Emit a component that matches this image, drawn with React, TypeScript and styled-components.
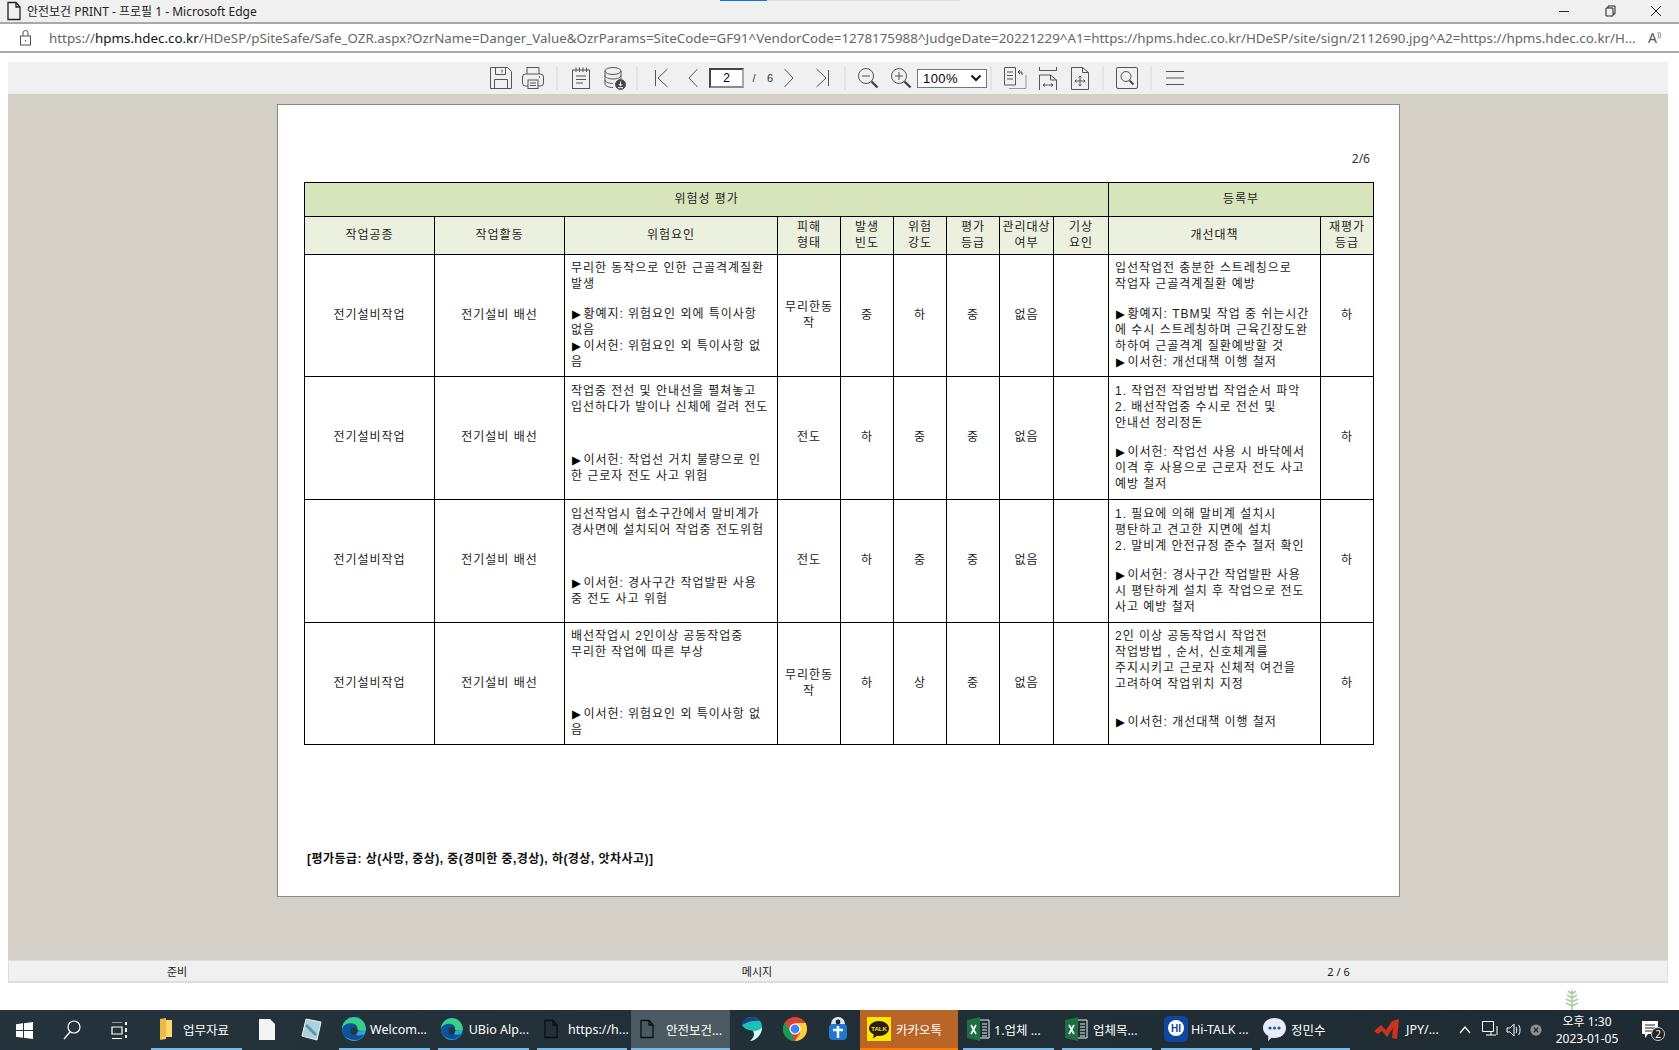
import React from "react";
import styled, { createGlobalStyle } from "styled-components";

const UI = `"Noto Sans", "Noto Sans CJK KR", sans-serif`;
const DOC = `"Liberation Sans", "Noto Sans CJK KR", sans-serif`;

const Global = createGlobalStyle`
  html, body { margin: 0; padding: 0; background: #fff; overflow: hidden; }
  * { box-sizing: border-box; }
`;

const Shell = styled.div`
  width: 1679px; height: 1050px; display: flex; flex-direction: column;
  position: relative; overflow: hidden; background: #fff; font-family: ${UI};
`;
const LoadBar = styled.div`position: absolute; left: 720px; top: 0; width: 47px; height: 1px; background: #0a78d4;`;
const LoadTrack = styled.div`position: absolute; left: 767px; top: 0; width: 193px; height: 1px; background: #e0e0e0;`;

const TitleBar = styled.div`
  height: 24px; flex: none; background: #f0f0f0; border-bottom: 2px solid #a8a8a8;
  display: flex; align-items: center; padding-left: 6px; color: #222; font-size: 12px; gap: 5px;
`;
const TitleText = styled.span`flex: 1; white-space: nowrap;`;
const WinControls = styled.div`display: flex; align-items: center; gap: 0;`;
const WinBtn = styled.svg`width: 46px; height: 12px; fill: none; stroke: #222; stroke-width: 1;`;

const UrlBar = styled.div`
  height: 29px; flex: none; background: #fff; border-bottom: 2px solid #a8a8a8;
  display: flex; align-items: center; padding-left: 20px;
`;
const UrlText = styled.div`
  margin-left: 18px; width: 1590px; white-space: nowrap;
  font-size: 13.36px; color: #666;
  b { font-weight: 400; color: #111; }
`;
const ReadAloud = styled.span`margin-left: 9px; font-size: 14px; color: #555; position: relative;`;

const Body = styled.div`
  flex: 1; display: flex; flex-direction: column; padding: 9px 11px 27px 8px; min-height: 0;
`;
const Toolbar = styled.div`
  height: 32px; flex: none; background: #f0f0f0; display: flex; align-items: center; padding-left: 477px;
`;
const Tool = styled.div<{ $w: number }>`
  width: ${p => p.$w}px; height: 32px; flex: none; display: flex; align-items: center; justify-content: center;
`;
const ToolIcon = styled.svg`fill: none; stroke: #555; stroke-width: 1; display: block;`;
const Sep = styled.div<{ $w: number }>`
  width: ${p => p.$w}px; height: 24px; flex: none; display: flex; justify-content: center;
  &::after { content: ""; width: 2px; height: 100%; background: #e4e4e4; }
`;
const PageInput = styled.div`
  width: 35px; height: 20px; margin-left: 5px; flex: none; background: #fff; border: 2px solid #444; border-right-color: #aaa; border-bottom-color: #888;
  font: 12px ${DOC}; color: #000; display: flex; align-items: center; justify-content: center;
`;
const PageLabel = styled.div<{ $w: number }>`
  width: ${p => p.$w}px; flex: none; text-align: center; font: 11px ${DOC}; color: #333;
`;
const ZoomSelect = styled.div`
  width: 70px; height: 19px; margin-left: 4px; flex: none; background: #fff; border: 1px solid #767676;
  display: flex; align-items: center; justify-content: space-between; padding: 0 4px 0 5px;
  font: 13px ${DOC}; color: #000; letter-spacing: .4px;
`;

const Viewer = styled.div`
  flex: 1; background: #d4d0c8; padding: 10px 0 0 269px; min-height: 0;
`;
const Page = styled.div`
  width: 1123px; height: 793px; background: #fff; border: 1px solid #8a8a8a; padding: 46px 0 0 26px;
  font: 12px/16px ${DOC}; color: #1c1c1c;
`;
const PageNo = styled.div`text-align: right; padding-right: 29px; height: 16px; font-family: ${UI}; color: #333;`;
const Sheet = styled.table`
  margin-top: 15px; width: 1070px; table-layout: fixed; border-collapse: collapse; letter-spacing: .96px;
  td, th { border: 1px solid #000; padding: 0 0 2px; font-weight: 400; text-align: center; vertical-align: middle; white-space: pre; }
`;
const GroupCell = styled.th`background: #d8e4bc;`;
const HeadCell = styled.th`background: #ebf1de;`;
const TextCell = styled.td`
  && { vertical-align: top; text-align: left; padding: 5px 0 0 6px; }
`;
const Line = styled.div`height: 16px;`;
const Gap = styled.div<{ $h: number }>`height: ${p => p.$h}px;`;
const Marker = styled.span`
  display: inline-block; width: 12.5px; font: 11.5px/16px "DejaVu Sans", sans-serif; letter-spacing: 0; color: #000; padding-left: 1px;
`;
const Legend = styled.div`
  margin: 106px 0 0 3px; font-weight: 700; white-space: nowrap; letter-spacing: .46px; color: #111;
`;

const Status = styled.div`
  height: 23px; flex: none; background: #f0f0f0; border: 1px solid #dedede; border-width: 1px 1px 2px;
  display: grid; grid-template-columns: 336px 824px 339px 1fr; align-items: center; font-size: 11px; color: #222; text-align: center;
`;

const Taskbar = styled.div`
  height: 40px; flex: none; background: linear-gradient(90deg, #25343c, #202e35 60%, #1f2b32); display: flex; align-items: stretch; color: #fff;
  font-size: 12.5px; position: relative;
`;
const Plant = styled.svg`position: absolute; left: 1562px; top: -22px; width: 20px; height: 22px;`;
const SysBtn = styled.div<{ $w: number }>`
  width: ${p => p.$w}px; flex: none; display: flex; align-items: center; justify-content: center;
`;
const TaskItem = styled.div<{ $w: number; $ml?: number; $open?: boolean; $active?: boolean; $flash?: boolean }>`
  width: ${p => p.$w}px; margin-left: ${p => p.$ml ?? 0}px; flex: none; display: flex; align-items: center; gap: 3px;
  padding-left: ${p => (p.$w < 50 ? 0 : 2)}px; justify-content: ${p => (p.$w < 50 ? "center" : "flex-start")};
  background: ${p => (p.$flash ? "#b86527" : p.$active ? "#4a5a60" : "transparent")};
  border-bottom: 2px solid ${p => (p.$flash ? "#ff7a00" : p.$open || p.$active ? "#76b9ed" : "transparent")};
  white-space: nowrap;
`;
const TaskLabel = styled.span<{ $ml?: number }>`margin-left: ${p => p.$ml ?? 0}px;`;
const TaskGlyph = styled.span<{ $ml?: number }>`display: flex; margin-left: ${p => p.$ml ?? 0}px;`;
const Tray = styled.div`flex: 1; display: flex; align-items: center; min-width: 0;`;
const TrayIcon = styled.div<{ $w: number }>`width: ${p => p.$w}px; flex: none; display: flex; justify-content: center;`;
const Clock = styled.div`
  width: 84px; flex: none; text-align: center; font-size: 12px; line-height: 17px; margin-left: 3px;
`;
const Notify = styled.div`width: 40px; flex: none; position: relative; display: flex; justify-content: center; margin-left: 1px;`;
const NotifyBadge = styled.span`
  position: absolute; left: 21px; top: 6px; width: 14px; height: 14px; border-radius: 50%; background: #222; border: 1px solid #ccc;
  font-size: 10px; line-height: 12px; text-align: center; color: #fff;
`;

/* ---------- drawn icons ---------- */
const DocIcon = ({ stroke = "#222", fill = "none" }: { stroke?: string; fill?: string }) => (
  <svg width="16" height="20" viewBox="0 0 16 20" fill={fill} stroke={stroke} strokeWidth="1.3">
    <path d="M2 1.5h8l4 4.5v12.5H2z" /><path d="M10 1.5V6h4" />
  </svg>
);
const EdgeIcon = () => (
  <svg width="26" height="26" viewBox="0 0 24 24">
    <defs>
      <linearGradient id="eg1" x1="0" y1="0" x2="1" y2="1"><stop offset="0" stopColor="#35c1f1" /><stop offset="1" stopColor="#1b9de2" /></linearGradient>
      <linearGradient id="eg2" x1="0" y1="0" x2="1" y2="1"><stop offset="0" stopColor="#0c59a4" /><stop offset="1" stopColor="#114a8b" /></linearGradient>
    </defs>
    <circle cx="12" cy="12" r="11" fill="url(#eg1)" />
    <path d="M1 13C2 6 8 4 13 5c5 1 8 5 7 9h-8c0 2 2 4 5 4l4-1c-2 4-6 6-10 5C5 21 1 18 1 13z" fill="url(#eg2)" />
    <path d="M23 13c0-6-4-11-11-11C6 2 2 6 1 11c2-3 6-5 10-4 3 .5 5 3 4 6 1 1 7 1 8 0z" fill="#3ad07d" />
    <circle cx="12" cy="14" r="3.4" fill="#26343c" opacity=".95" />
  </svg>
);
const ExcelIcon = () => (
  <svg width="23" height="24" viewBox="0 0 23 24">
    <path d="M0 3l13-3v24L0 21z" fill="#1d7044" />
    <path d="M13 3h9v18h-9" fill="none" stroke="#e8f3ec" strokeWidth="1" />
    <path d="M15 7h5M15 10h5M15 13h5M15 16h5M15 19h5" stroke="#e8f3ec" strokeWidth="1" />
    <path d="M4 8l5 9M9 8l-5 9" stroke="#fff" strokeWidth="1.6" />
  </svg>
);

const risks: (string | number)[][] = [
  ["무리한 동작으로 인한 근골격계질환", "발생", 14, "▶황예지: 위험요인 외에 특이사항", "없음", "▶이서헌: 위험요인 외 특이사항 없", "음"],
  [1, "작업중 전선 및 안내선을 펼쳐놓고", "입선하다가 발이나 신체에 걸려 전도", 37, "▶이서헌: 작업선 거치 불량으로 인", "한 근로자 전도 사고 위험"],
  [1, "입선작업시 협소구간에서 말비계가", "경사면에 설치되어 작업중 전도위험", 37, "▶이서헌: 경사구간 작업발판 사용", "중 전도 사고 위험"],
  ["배선작업시 2인이상 공동작업중", "무리한 작업에 따른 부상", 46, "▶이서헌: 위험요인 외 특이사항 없", "음"],
];
const fixes: (string | number)[][] = [
  ["입선작업전 충분한 스트레칭으로", "작업자 근골격계질환 예방", 14, "▶황예지: TBM및 작업 중 쉬는시간", "에 수시 스트레칭하며 근육긴장도완", "하하여 근골격계 질환예방할 것", "▶이서헌: 개선대책 이행 철저"],
  [1, "1. 작업전 작업방법 작업순서 파악", "2. 배선작업중 수시로 전선 및", "안내선 정리정돈", 13, "▶이서헌: 작업선 사용 시 바닥에서", "이격 후 사용으로 근로자 전도 사고", "예방 철저"],
  [1, "1. 필요에 의해 말비계 설치시", "평탄하고 견고한 지면에 설치", "2. 말비계 안전규정 준수 철저 확인", 13, "▶이서헌: 경사구간 작업발판 사용", "시 평탄하게 설치 후 작업으로 전도", "사고 예방 철저"],
  ["2인 이상 공동작업시 작업전", "작업방법 , 순서, 신호체계를", "주지시키고 근로자 신체적 여건을", "고려하여 작업위치 지정", 22, "▶이서헌: 개선대책 이행 철저"],
];
const rows = [
  { harm: "무리한동\n작", freq: "중", sev: "하", grade: "중", h: 122 },
  { harm: "전도", freq: "하", sev: "중", grade: "중", h: 123 },
  { harm: "전도", freq: "하", sev: "중", grade: "중", h: 123 },
  { harm: "무리한동\n작", freq: "하", sev: "상", grade: "중", h: 122 },
];
const colWidths = [130, 130, 213, 63, 53, 53, 53, 54, 55, 212, 53];
const heads = ["작업공종", "작업활동", "위험요인", "피해\n형태", "발생\n빈도", "위험\n강도", "평가\n등급", "관리대상\n여부", "기상\n요인", "개선대책", "재평가\n등급"];

const Lines = ({ items }: { items: (string | number)[] }) => (
  <>
    {items.map((l, i) =>
      typeof l === "number" ? <Gap key={i} $h={l} /> :
      l.startsWith("▶") ? <Line key={i}><Marker>▶</Marker>{l.slice(1)}</Line> :
      <Line key={i}>{l}</Line>
    )}
  </>
);

export default function App() {
  return (
    <Shell>
      <Global />
      <LoadBar /><LoadTrack />
      <TitleBar>
        <DocIcon />
        <TitleText>안전보건 PRINT - 프로필 1 - Microsoft Edge</TitleText>
        <WinControls>
          <WinBtn viewBox="0 0 46 12"><path d="M18 6.5h10" /></WinBtn>
          <WinBtn viewBox="0 0 46 12"><path d="M19 3h7v8h-7zM21 3V1h7v8h-2" /></WinBtn>
          <WinBtn viewBox="0 0 46 12"><path d="M18 1l10 10M28 1L18 11" /></WinBtn>
        </WinControls>
      </TitleBar>
      <UrlBar>
        <svg width="11" height="16" viewBox="0 0 11 16" fill="none" stroke="#555"><rect x=".5" y="6" width="10" height="9" /><path d="M3 6V3a2.5 2.5 0 0 1 5 0v3" /><path d="M5.5 10v1.5" /></svg>
        <UrlText>https://<b>hpms.hdec.co.kr</b>/HDeSP/pSiteSafe/Safe_OZR.aspx?OzrName=Danger_Value&amp;OzrParams=SiteCode=GF91^VendorCode=1278175988^JudgeDate=20221229^A1=https://hpms.hdec.co.kr/HDeSP/site/sign/2112690.jpg^A2=https://hpms.hdec.co.kr/H...</UrlText>
        <ReadAloud>A<sup style={{ fontSize: 7 }}>))</sup></ReadAloud>
      </UrlBar>
      <Body>
        <Toolbar>
          <Tool $w={32}><ToolIcon width="22" height="22" viewBox="0 0 22 22"><path d="M.5.5h17l4 4v17H.5z" /><path d="M5.5.5v7h10v-7M12 2.5v3" /><path d="M4.5 21.5v-9h13v9" /></ToolIcon></Tool>
          <Tool $w={32}><ToolIcon width="22" height="22" viewBox="0 0 22 22"><path d="M5 7V.5h12V7" /><rect x=".5" y="7" width="21" height="12" rx="3" /><rect x="6" y="13" width="10" height="8.5" fill="#f0f0f0" /><path d="M8 16h6M8 18.5h6" /><path d="M17 10h1" strokeWidth="1.4" /></ToolIcon></Tool>
          <Sep $w={16} />
          <Tool $w={32}><ToolIcon width="18" height="22" viewBox="0 0 18 22"><rect x=".5" y="3" width="17" height="18.5" /><path d="M4 .5V5M7.5.5V5M11 .5V5M14.5.5V5M4 9h10M4 12.5h10M4 16h7" /></ToolIcon></Tool>
          <Tool $w={36}><ToolIcon width="22" height="23" viewBox="0 0 22 23"><ellipse cx="9" cy="4" rx="8" ry="3.5" /><path d="M1 4v13c0 2 4 3.5 8 3.5M17 4v8M1 8.5c0 2 4 3.5 8 3.5s8-1.5 8-3.5M1 13c0 2 4 3.5 8 3.5" /><circle cx="16.5" cy="17.5" r="5" fill="#444" /><path d="M16.5 14.5v4M14.7 17l1.8 2 1.8-2M14 20.7h5" stroke="#fff" /></ToolIcon></Tool>
          <Sep $w={8} />
          <Tool $w={41}><ToolIcon width="13" height="20" viewBox="0 0 13 20"><path d="M.5 2v16M12.5 1L3 10l9.5 9" /></ToolIcon></Tool>
          <Tool $w={22}><ToolIcon width="10" height="20" viewBox="0 0 10 20"><path d="M9.5 1L1 10l8.5 9" /></ToolIcon></Tool>
          <PageInput>2</PageInput>
          <PageLabel $w={20}>/</PageLabel>
          <PageLabel $w={12}>6</PageLabel>
          <Tool $w={25}><ToolIcon width="10" height="20" viewBox="0 0 10 20"><path d="M.5 1L9 10l-8.5 9" /></ToolIcon></Tool>
          <Tool $w={42}><ToolIcon width="13" height="20" viewBox="0 0 13 20"><path d="M12.5 2v16M.5 1L10 10 .5 19" /></ToolIcon></Tool>
          <Sep $w={4} />
          <Tool $w={43}><ToolIcon width="21" height="21" viewBox="0 0 21 21"><circle cx="8" cy="8" r="7.5" /><path d="M4 8h8" /><path d="M13.5 13.5l6 6" stroke="#444" strokeWidth="2.4" /></ToolIcon></Tool>
          <Tool $w={23}><ToolIcon width="21" height="21" viewBox="0 0 21 21"><circle cx="8" cy="8" r="7.5" /><path d="M4 8h8M8 4v8" /><path d="M13.5 13.5l6 6" stroke="#444" strokeWidth="2.4" /></ToolIcon></Tool>
          <ZoomSelect>100%
            <svg width="12" height="8" viewBox="0 0 12 8" fill="none" stroke="#111" strokeWidth="2"><path d="M1.5 1.5L6 6l4.5-4.5" /></svg>
          </ZoomSelect>
          <Sep $w={8} />
          <Tool $w={40}><ToolIcon width="23" height="23" viewBox="0 0 23 23"><path d="M.5 18V.5h11V18z" /><path d="M3 5h6M3 8.5h6M3 12h6" /><path d="M5 21.5h17V8" stroke="#999" /><path d="M14 5h4v3M16 3l-2 2 2 2" stroke="#444" /></ToolIcon></Tool>
          <Tool $w={25}><ToolIcon width="18" height="23" viewBox="0 0 18 23"><path d="M.5 0v3.5h17V0" /><path d="M.5 23V8h11l6 5v10" /><path d="M11.5 8v5h6" /><path d="M4 18h10M4 18l2-1.5M4 18l2 1.5M14 18l-2-1.5M14 18l-2 1.5" /></ToolIcon></Tool>
          <Tool $w={39}><ToolIcon width="18" height="23" viewBox="0 0 18 23"><path d="M.5.5h11l6 5v17H.5z" /><path d="M11.5.5v5h6" /><path d="M9 9v10M4 14h10M9 9L7.5 10.5M9 9l1.5 1.5M9 19l-1.5-1.5M9 19l1.5-1.5M4 14l1.5-1.5M4 14l1.5 1.5M14 14l-1.5-1.5M14 14l-1.5 1.5" /></ToolIcon></Tool>
          <Sep $w={8} />
          <Tool $w={40}><ToolIcon width="22" height="22" viewBox="0 0 22 22"><rect x=".5" y=".5" width="21" height="21" rx="1.5" /><circle cx="10" cy="9.5" r="5" /><path d="M13.5 13.5l4 4" stroke="#444" strokeWidth="1.8" /></ToolIcon></Tool>
          <Sep $w={8} />
          <Tool $w={40}><ToolIcon width="18" height="14" viewBox="0 0 18 14" stroke="#777"><path d="M0 .5h18M0 7h18M0 13.5h18" /></ToolIcon></Tool>
        </Toolbar>
        <Viewer>
          <Page>
            <PageNo>2/6</PageNo>
            <Sheet>
              <colgroup>{colWidths.map((w, i) => <col key={i} style={{ width: w }} />)}</colgroup>
              <thead>
                <tr style={{ height: 34 }}>
                  <GroupCell colSpan={9}>위험성 평가</GroupCell>
                  <GroupCell colSpan={2}>등록부</GroupCell>
                </tr>
                <tr style={{ height: 38 }}>
                  {heads.map(h => <HeadCell key={h}>{h}</HeadCell>)}
                </tr>
              </thead>
              <tbody>
                {rows.map((r, i) => (
                  <tr key={i} style={{ height: r.h }}>
                    <td>전기설비작업</td>
                    <td>전기설비 배선</td>
                    <TextCell><Lines items={risks[i]} /></TextCell>
                    <td>{r.harm}</td>
                    <td>{r.freq}</td>
                    <td>{r.sev}</td>
                    <td>{r.grade}</td>
                    <td>없음</td>
                    <td></td>
                    <TextCell><Lines items={fixes[i]} /></TextCell>
                    <td>하</td>
                  </tr>
                ))}
              </tbody>
            </Sheet>
            <Legend>[평가등급: 상(사망, 중상), 중(경미한 중,경상), 하(경상, 앗차사고)]</Legend>
          </Page>
        </Viewer>
        <Status>
          <span>준비</span>
          <span>메시지</span>
          <span>2 / 6</span>
          <span />
        </Status>
      </Body>
      <Taskbar>
        <Plant viewBox="0 0 20 22"><path d="M10 22V2M10 6L6 3M10 6l4-3M10 10L5 7M10 10l5-3M10 14L4 11M10 14l6-3M10 18l-6-3M10 18l6-3" stroke="#a9cfa0" strokeWidth="1.6" fill="none" /></Plant>
        <SysBtn $w={48}><svg width="17" height="17" viewBox="0 0 17 17" fill="#fff"><path d="M0 2.3l7-1v6.7H0zM8 1.2L17 0v8H8zM0 9h7v6.7l-7-1zM8 9h9v8l-9-1.2z" /></svg></SysBtn>
        <SysBtn $w={47}><svg width="18" height="20" viewBox="0 0 18 20" fill="none" stroke="#fff" strokeWidth="1.2"><circle cx="11" cy="7" r="6" /><path d="M7 12l-6 7" /></svg></SysBtn>
        <SysBtn $w={50}><svg width="18" height="17" viewBox="0 0 18 17" fill="none" stroke="#fff" strokeWidth="1.2"><path d="M1 0h10M1 16.5h10M1 5h10v7H1z" /><path d="M15 0v3M15 6v4M15 13v3" strokeWidth="2" /></svg></SysBtn>
        <TaskItem $w={91} $ml={6} $open>
          <TaskGlyph $ml={6}><svg width="14" height="24" viewBox="0 0 14 24"><path d="M1 2l6-1v21l-6 1z" fill="#e9b949" /><path d="M7 3h6v17H3v2l4-1z" fill="#ffd66b" /></svg></TaskGlyph>
          <TaskLabel $ml={7}>업무자료</TaskLabel>
        </TaskItem>
        <TaskItem $w={44} $ml={3}><svg width="16" height="21" viewBox="0 0 16 21"><path d="M0 0h11l5 5v16H0z" fill="#f4f4f4" /></svg></TaskItem>
        <TaskItem $w={44} $ml={1}><svg width="22" height="24" viewBox="0 0 22 24"><path d="M5 2l15 3-4 18L1 19z" fill="#a9d2dc" stroke="#e8f3f5" /><path d="M5 8l10 10" stroke="#5a95a8" strokeWidth="3" /></svg></TaskItem>
        <TaskItem $w={91} $ml={5} $open><EdgeIcon /><TaskLabel>Welcom...</TaskLabel></TaskItem>
        <TaskItem $w={91} $ml={8} $open><EdgeIcon /><TaskLabel $ml={2}>UBio Alp...</TaskLabel></TaskItem>
        <TaskItem $w={90} $ml={8} $open><TaskGlyph $ml={4}><DocIcon stroke="#0b0f12" /></TaskGlyph><TaskLabel $ml={6}>https://h...</TaskLabel></TaskItem>
        <TaskItem $w={99} $ml={4} $active><TaskGlyph $ml={6}><DocIcon stroke="#0b0f12" /></TaskGlyph><TaskLabel $ml={8}>안전보건...</TaskLabel></TaskItem>
        <TaskItem $w={40} $ml={1}><svg width="23" height="26" viewBox="0 0 23 26"><path d="M12 1c7 0 10 5 10 10 0 7-5 13-12 14 4-3 5-7 3-10C9 14 4 13 2 9c1-5 5-8 10-8z" fill="#19c3b1" /><path d="M2 9c0-5 5-8 10-8 4 0 7 2 8 4-5-1-12 0-18 4z" fill="#233e8b" /><path d="M13 15c5 0 8-2 9-4 0 7-5 13-12 14 4-3 5-7 3-10z" fill="#dff5f2" /></svg></TaskItem>
        <TaskItem $w={40} $ml={4}><svg width="24" height="24" viewBox="0 0 24 24"><circle cx="12" cy="12" r="12" fill="#db4437" /><path d="M12 24C5.4 24 0 18.6 0 12c0-2.500.8-4.800 2-6.700L8 16l4 8z" fill="#0f9d58" /><path d="M12 6h10.700c.8 1.800 1.300 3.900 1.300 6 0 6.600-5.400 12-12 12l5-8z" fill="#ffcd40" /><circle cx="12" cy="12" r="5.600" fill="#fff" /><circle cx="12" cy="12" r="4.400" fill="#4285f4" /></svg></TaskItem>
        <TaskItem $w={40} $ml={3}><svg width="24" height="26" viewBox="0 0 24 26"><circle cx="12" cy="8" r="7" fill="#dce8f5" /><rect x="3" y="8" width="18" height="16" rx="4" fill="#1e78d2" /><path d="M12 10v12M7 14h10" stroke="#fff" strokeWidth="2.4" /><circle cx="12" cy="6" r="2.400" fill="#222" /></svg></TaskItem>
        <TaskItem $w={98} $ml={2} $flash>
          <TaskGlyph $ml={5}><svg width="24" height="24" viewBox="0 0 24 24"><rect width="24" height="24" fill="#ffe600" /><path d="M12 4c5.500 0 10 3.300 10 7.500S17.500 19 12 19c-1 0-1.500 0-2-.2L6 21.500l.8-4C4 16 2 14 2 11.500 2 7.300 6.500 4 12 4z" fill="#2b1c1c" /><text x="12" y="14" fontSize="6" textAnchor="middle" fill="#ffe600" fontFamily="Liberation Sans" fontWeight="700">TALK</text></svg></TaskGlyph>
          <TaskLabel $ml={2}>카카오톡</TaskLabel>
        </TaskItem>
        <TaskItem $w={91} $ml={5} $open><TaskGlyph $ml={2}><ExcelIcon /></TaskGlyph><TaskLabel $ml={1}>1.업체 ...</TaskLabel></TaskItem>
        <TaskItem $w={90} $ml={8} $open><TaskGlyph $ml={1}><ExcelIcon /></TaskGlyph><TaskLabel $ml={2}>업체목...</TaskLabel></TaskItem>
        <TaskItem $w={91} $ml={9} $open>
          <TaskGlyph $ml={1}><svg width="24" height="26" viewBox="0 0 24 26"><path d="M5 0h14a5 5 0 0 1 5 5v16a5 5 0 0 1-5 5H5a5 5 0 0 1-5-5V5a5 5 0 0 1 5-5z" fill="#0d47a1" /><circle cx="12" cy="12" r="8" fill="#fff" /><text x="12" y="16" fontSize="10" fontWeight="700" textAnchor="middle" fill="#0d47a1" fontFamily="Liberation Sans">HI</text></svg></TaskGlyph>
          <TaskLabel>Hi-TALK ...</TaskLabel>
        </TaskItem>
        <TaskItem $w={90} $ml={8} $open>
          <TaskGlyph $ml={1}><svg width="23" height="26" viewBox="0 0 23 26"><path d="M11.500 2C18 2 23 6 23 12s-5 10-11.500 10c-1 0-2 0-3-.3L5 25l.4-5C2 18 0 15.500 0 12 0 6 5 2 11.500 2z" fill="#e6ecf8" /><circle cx="7" cy="12" r="1.600" fill="#2e4ea8" /><circle cx="11.500" cy="12" r="1.600" fill="#2e4ea8" /><circle cx="16" cy="12" r="1.600" fill="#2e4ea8" /></svg></TaskGlyph>
          <TaskLabel $ml={2}>정민수</TaskLabel>
        </TaskItem>
        <TaskItem $w={80} $ml={18}>
          <TaskGlyph $ml={4}><svg width="25" height="20" viewBox="0 0 25 20"><path d="M0 12l7-6 5 5 6-9 7-2-2 20-5-1 1-10-6 9-5-6-4 3z" fill="#c7341f" /></svg></TaskGlyph>
          <TaskLabel $ml={4}>JPY/...</TaskLabel>
        </TaskItem>
        <Tray>
          <TrayIcon $w={34}><svg width="12" height="8" viewBox="0 0 12 8" fill="none" stroke="#fff" strokeWidth="1.200"><path d="M1 7l5-6 5 6" /></svg></TrayIcon>
          <TrayIcon $w={16}><svg width="16" height="18" viewBox="0 0 16 18" fill="none" stroke="#fff"><path d="M.5.5h11v10h-11zM4 14h10M9 10.500V14M15 5v9" /></svg></TrayIcon>
          <TrayIcon $w={32}><svg width="16" height="16" viewBox="0 0 16 16" fill="none" stroke="#fff"><path d="M1 6h3l4-4v12l-4-4H1zM10 5c1 1.500 1 4.500 0 6M12.500 3c2 2.500 2 7.500 0 10" /></svg></TrayIcon>
          <TrayIcon $w={12}><svg width="16" height="16" viewBox="0 0 16 16"><circle cx="8" cy="8" r="7.500" fill="#8a8f92" /><path d="M5 5l6 6M11 5l-6 6" stroke="#222" strokeWidth="1.500" /></svg></TrayIcon>
          <Clock>오후 1:30<br />2023-01-05</Clock>
          <Notify>
            <svg width="16" height="18" viewBox="0 0 16 18" fill="#fff"><path d="M0 0h16v13H6l-3 4v-4H0z" /><path d="M3 4h10M3 7h10M3 10h7" stroke="#222" /></svg>
            <NotifyBadge>2</NotifyBadge>
          </Notify>
        </Tray>
      </Taskbar>
    </Shell>
  );
}
